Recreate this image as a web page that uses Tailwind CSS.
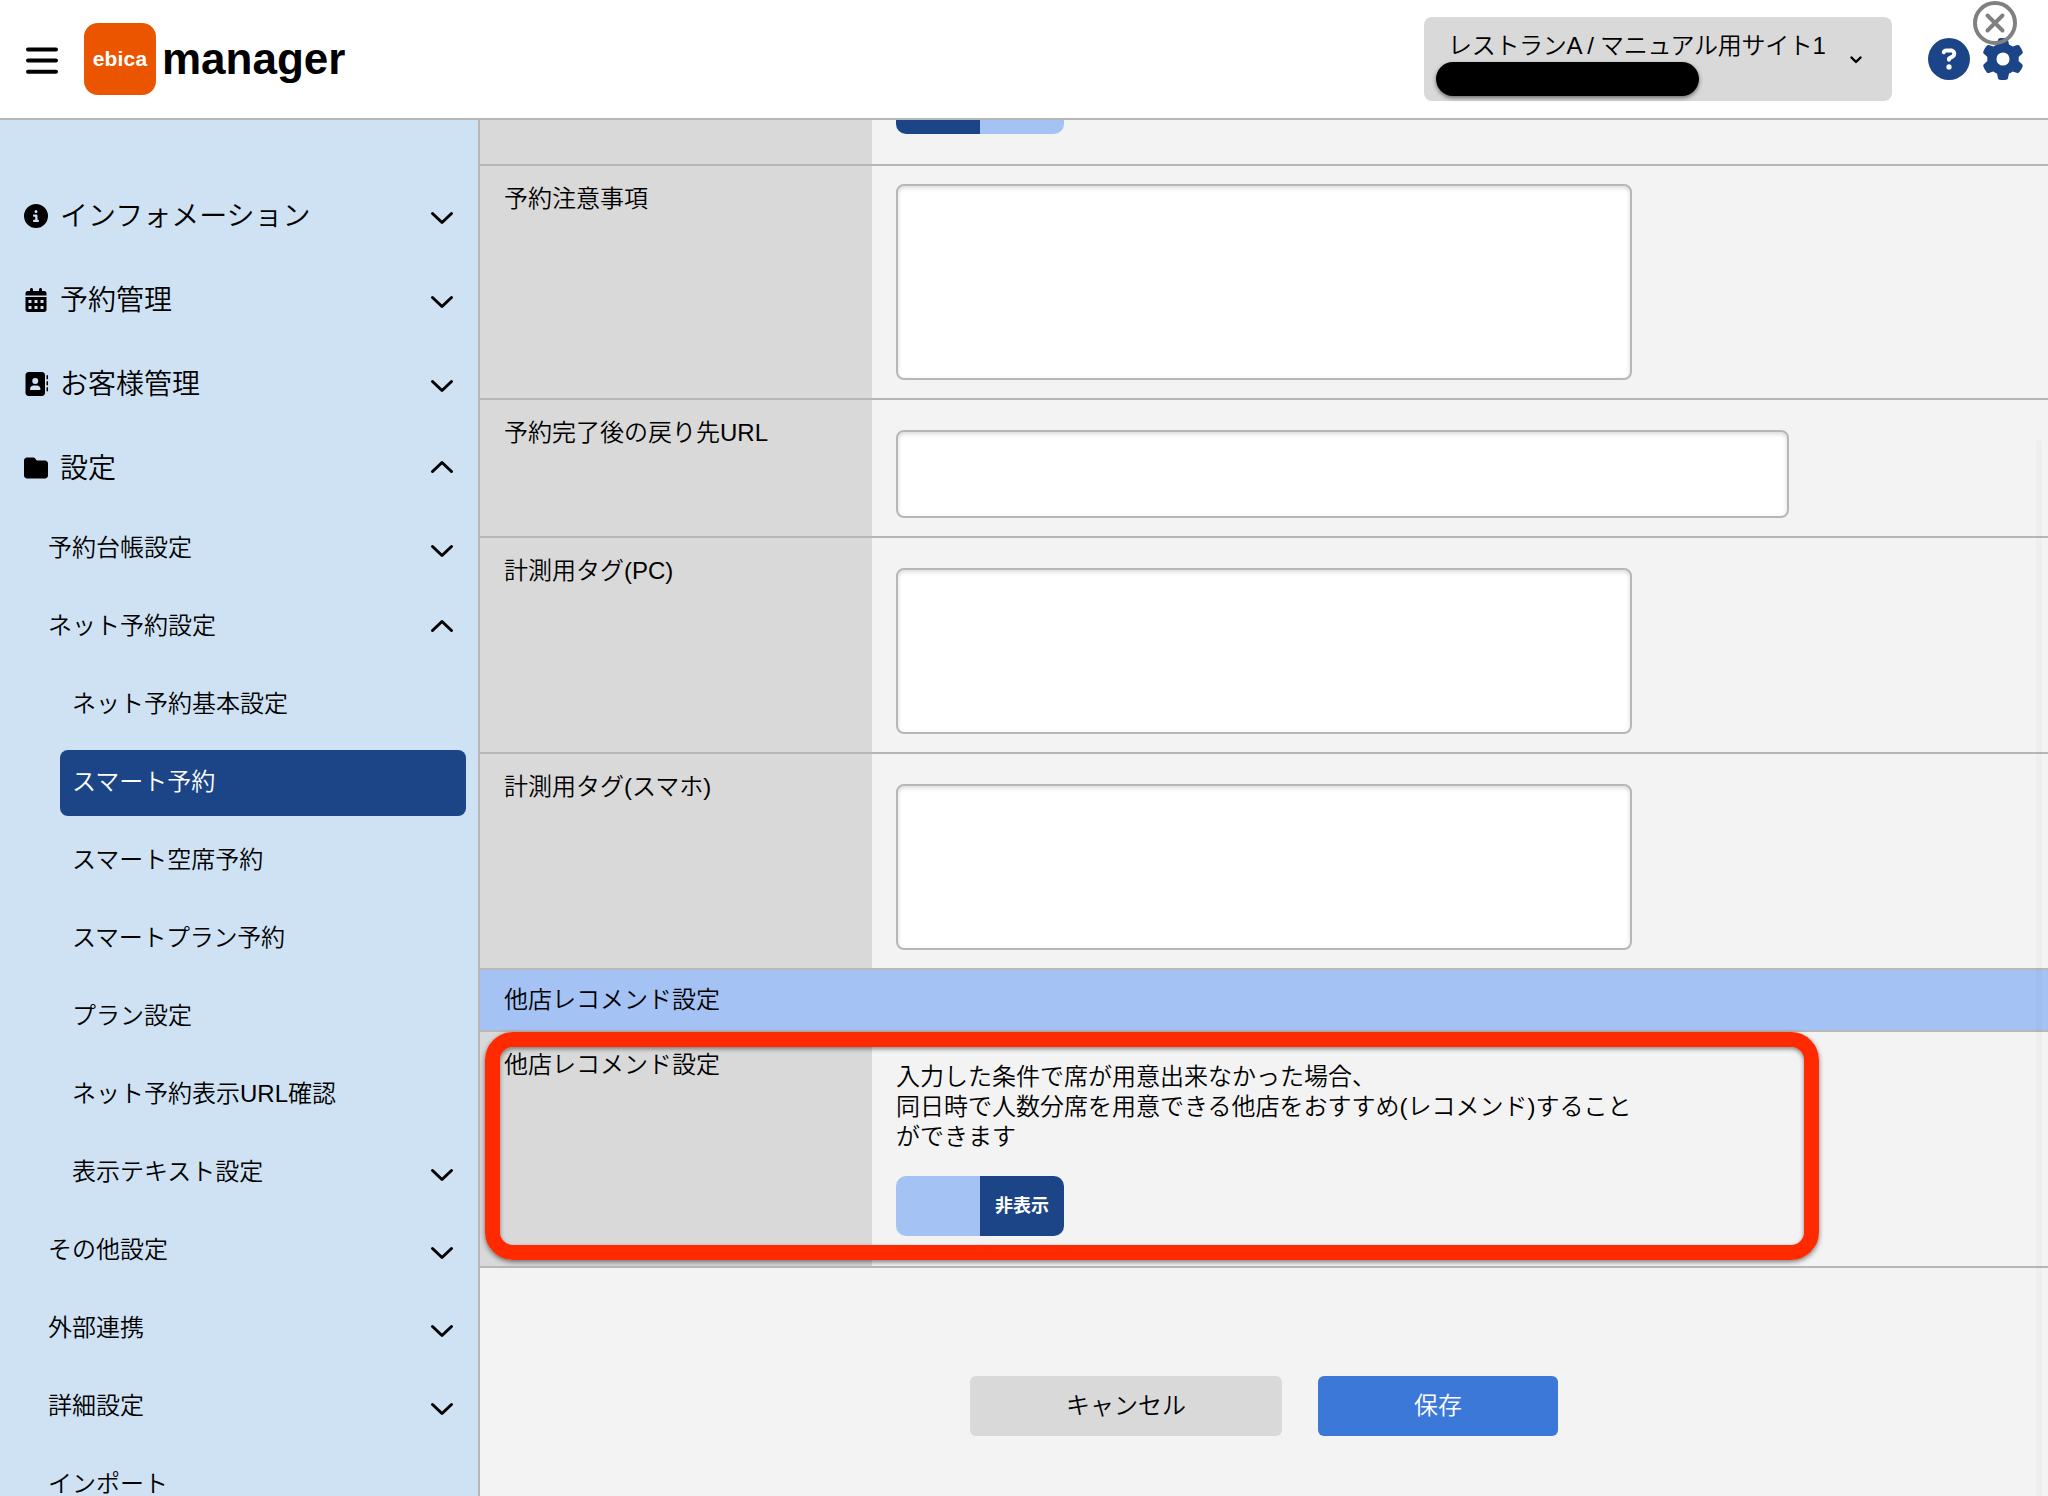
<!doctype html>
<html lang="ja">

<head>
  <meta charset="UTF-8">
  <meta name="viewport" content="width=device-width, initial-scale=1.0">
  <title>ebica manager</title>
  <script src="https://cdn.jsdelivr.net/npm/@tailwindcss/browser@4"></script>
</head>

<body class="relative h-screen overflow-hidden flex flex-col bg-[#f3f3f3] text-black text-2xl leading-[30px] font-[350] font-['Liberation_Sans','Noto_Sans_CJK_JP',sans-serif]">
  <svg class="hidden">
    <symbol id="down" viewBox="0 0 24 14"><path d="M2.5 2.5 12 11.5l9.5-9" fill="none" stroke="currentColor" stroke-width="3" stroke-linecap="round" stroke-linejoin="round" /></symbol>
    <symbol id="up" viewBox="0 0 24 14"><path d="M2.5 11.5 12 2.5l9.5 9" fill="none" stroke="currentColor" stroke-width="3" stroke-linecap="round" stroke-linejoin="round" /></symbol>
  </svg>

  <header class="shrink-0 h-[120px] flex items-center bg-white border-b-2 border-[#b7b7b7]">
    <svg class="ml-[26px] mt-0.5 w-8 h-[27px]" viewBox="0 0 32 27" fill="none" stroke="currentColor" stroke-width="4" stroke-linecap="round">
      <path d="M2 2.4h28M2 13.6h28M2 24.8h28" />
    </svg>
    <div class="ml-[26px] size-[72px] rounded-[14px] bg-[#eb5500] text-white text-[21px] tracking-[0.2px] font-bold flex items-center justify-center">ebica</div>
    <h1 class="ml-1.5 text-[44px] leading-none font-bold">manager</h1>

    <div class="ml-auto w-[468px] h-[84px] pl-3 pr-[30px] rounded-lg bg-[#d9d9d9] flex items-center justify-between">
      <div class="w-[390px] pt-[9px]">
        <p class="pl-3 whitespace-nowrap tracking-[-0.3px]">レストランA / マニュアル用サイト1</p>
        <div class="mt-[1px] w-[263px] h-[34px] rounded-full bg-black shadow-[0_2px_4px_rgba(0,0,0,0.5)]"></div>
      </div>
      <svg class="mt-0.5 w-3 h-2" viewBox="0 0 12 8" fill="none" stroke="currentColor" stroke-width="2.4" stroke-linecap="round" stroke-linejoin="round"><path d="M1.5 1.5 6 6l4.5-4.5" /></svg>
    </div>
    <svg class="ml-9 size-[42px] fill-[#1c4587]" viewBox="0 0 512 512"><path d="M256 512A256 256 0 1 0 256 0a256 256 0 1 0 0 512zM169.800 165.300c7.900-22.300 29.100-37.300 52.800-37.300l58.300 0c34.900 0 63.100 28.300 63.100 63.100c0 22.600-12.100 43.500-31.700 54.800L280 264.400c-.2 13-10.900 23.600-24 23.600c-13.300 0-24-10.700-24-24l0-13.500c0-8.600 4.600-16.500 12.100-20.800l44.300-25.400c4.700-2.700 7.600-7.700 7.600-13.100c0-8.400-6.800-15.100-15.100-15.100l-58.300 0c-3.400 0-6.400 2.100-7.500 5.300l-.4 1.200c-4.400 12.500-18.200 19-30.600 14.600s-19-18.200-14.600-30.600l.4-1.200zM224 352a32 32 0 1 1 64 0 32 32 0 1 1 -64 0z" /></svg>
    <svg class="ml-3 mr-6 size-[42px] fill-[#1c4587]" viewBox="0 0 512 512"><path d="M495.9 166.600c3.200 8.700 .5 18.400-6.400 24.600l-43.300 39.400c1.100 8.300 1.700 16.800 1.700 25.400s-.6 17.100-1.700 25.400l43.300 39.400c6.900 6.200 9.600 15.900 6.400 24.600c-4.400 11.900-9.700 23.300-15.800 34.300l-4.700 8.100c-6.600 11-14 21.400-22.100 31.200c-5.900 7.200-15.700 9.600-24.500 6.800l-55.700-17.700c-13.400 10.300-28.200 18.900-44 25.400l-12.500 57.100c-2 9.100-9 16.300-18.200 17.800c-13.800 2.300-28 3.500-42.500 3.500s-28.700-1.200-42.500-3.500c-9.200-1.500-16.200-8.700-18.200-17.800l-12.500-57.100c-15.800-6.500-30.600-15.100-44-25.400L83.100 425.900c-8.800 2.800-18.600 .3-24.500-6.800c-8.100-9.800-15.500-20.200-22.100-31.200l-4.700-8.100c-6.100-11-11.400-22.400-15.800-34.300c-3.200-8.700-.5-18.400 6.400-24.600l43.300-39.400C64.600 273.100 64 264.600 64 256s.6-17.100 1.700-25.400L22.400 191.200c-6.900-6.200-9.600-15.900-6.400-24.600c4.400-11.900 9.700-23.300 15.800-34.300l4.700-8.100c6.600-11 14-21.400 22.100-31.200c5.900-7.200 15.700-9.600 24.500-6.800l55.700 17.700c13.400-10.300 28.200-18.900 44-25.400l12.500-57.100c2-9.100 9-16.300 18.200-17.800C227.300 1.200 241.500 0 256 0s28.700 1.200 42.500 3.500c9.200 1.500 16.200 8.700 18.200 17.800l12.500 57.100c15.800 6.500 30.600 15.100 44 25.400l55.700-17.700c8.800-2.800 18.600-.3 24.500 6.800c8.100 9.800 15.500 20.200 22.100 31.200l4.700 8.100c6.100 11 11.400 22.400 15.800 34.300zM256 336a80 80 0 1 0 0-160 80 80 0 1 0 0 160z" /></svg>
  </header>

  <!-- overlay close button -->
  <svg class="absolute top-[1px] right-[31px] size-11" viewBox="0 0 44 44" fill="none" stroke="#808080" stroke-width="4" stroke-linecap="round">
    <circle cx="22" cy="22" r="20" />
    <path d="m14.500 14.500 15 15M29.500 14.500l-15 15" />
  </svg>

  <div class="flex-1 min-h-0 flex">
    <nav class="shrink-0 w-[480px] pt-[54px] bg-[#cfe2f3] border-r-2 border-[#b7b7b7] overflow-hidden">
      <ul class="text-[28px]">
        <li class="h-[84px] pl-6 pr-6 flex items-center">
          <svg class="size-6 mr-3" viewBox="0 0 512 512"><path d="M256 512A256 256 0 1 0 256 0a256 256 0 1 0 0 512zM216 336l24 0 0-64-24 0c-13.300 0-24-10.700-24-24s10.700-24 24-24l48 0c13.300 0 24 10.700 24 24l0 88 8 0c13.300 0 24 10.700 24 24s-10.700 24-24 24l-80 0c-13.300 0-24-10.700-24-24s10.700-24 24-24zm40-208a32 32 0 1 1 0 64 32 32 0 1 1 0-64z" /></svg>
          <span class="pt-0.5">インフォメーション</span>
          <svg class="ml-auto mt-[3px] w-6 h-3.5"><use href="#down" /></svg>
        </li>
        <li class="h-[84px] pl-6 pr-6 flex items-center">
          <svg class="size-6 mr-3" viewBox="-32 0 512 512" fill-rule="evenodd"><path d="M128 0c17.700 0 32 14.300 32 32v32h128V32c0-17.700 14.300-32 32-32s32 14.300 32 32v32h48c26.500 0 48 21.500 48 48v48H0v-48C0 85.500 21.500 64 48 64h48V32c0-17.700 14.300-32 32-32zM0 192h448v272c0 26.500-21.500 48-48 48H48c-26.500 0-48-21.500-48-48zM64 256v64h64v-64zm128 0v64h64v-64zm128 0v64h64v-64zM64 384v64h64v-64zm128 0v64h64v-64zm128 0v64h64v-64z" /></svg>
          <span class="pt-0.5">予約管理</span>
          <svg class="ml-auto mt-[3px] w-6 h-3.5"><use href="#down" /></svg>
        </li>
        <li class="h-[84px] pl-6 pr-6 flex items-center">
          <svg class="size-6 mr-3" viewBox="0 0 512 512"><path d="M96 0C60.700 0 32 28.700 32 64l0 384c0 35.300 28.700 64 64 64l288 0c35.300 0 64-28.700 64-64l0-384c0-35.300-28.700-64-64-64L96 0zM208 288l64 0c44.200 0 80 35.800 80 80c0 8.800-7.200 16-16 16l-192 0c-8.800 0-16-7.200-16-16c0-44.200 35.800-80 80-80zm-32-96a64 64 0 1 1 128 0 64 64 0 1 1 -128 0zM512 80c0-8.800-7.200-16-16-16s-16 7.200-16 16l0 64c0 8.800 7.200 16 16 16s16-7.200 16-16l0-64zM496 192c-8.800 0-16 7.200-16 16l0 64c0 8.800 7.200 16 16 16s16-7.200 16-16l0-64c0-8.800-7.200-16-16-16zm16 144c0-8.800-7.200-16-16-16s-16 7.200-16 16l0 64c0 8.800 7.200 16 16 16s16-7.200 16-16l0-64z" /></svg>
          <span class="pt-0.5">お客様管理</span>
          <svg class="ml-auto mt-[3px] w-6 h-3.5"><use href="#down" /></svg>
        </li>
        <li class="h-[84px] pl-6 pr-6 flex items-center">
          <svg class="size-6 mr-3" viewBox="0 0 512 512"><path d="M64 480H448c35.300 0 64-28.700 64-64V160c0-35.300-28.700-64-64-64H288c-10.100 0-19.600-4.700-25.600-12.800L243.200 57.600C231.100 41.500 212.100 32 192 32H64C28.700 32 0 60.700 0 96V416c0 35.300 28.700 64 64 64z" /></svg>
          <span class="pt-0.5">設定</span>
          <svg class="ml-auto mb-[3px] w-6 h-3.5"><use href="#up" /></svg>
        </li>
      </ul>
      <ul>
        <li class="h-[78px] pb-0.5 pl-12 pr-6 flex items-center justify-between">予約台帳設定<svg class="mt-1.5 w-6 h-3.5"><use href="#down" /></svg></li>
        <li class="h-[78px] pb-0.5 pl-12 pr-6 flex items-center justify-between">ネット予約設定<svg class="w-6 h-3.5"><use href="#up" /></svg></li>
        <li class="h-[78px] pb-0.5 pl-[72px] flex items-center">ネット予約基本設定</li>
        <li class="h-[66px] pb-0.5 my-1.5 ml-[60px] mr-3 pl-3 flex items-center rounded-lg bg-[#1c4587] text-white">スマート予約</li>
        <li class="h-[78px] pb-0.5 pl-[72px] flex items-center">スマート空席予約</li>
        <li class="h-[78px] pb-0.5 pl-[72px] flex items-center tracking-[-0.3px]">スマートプラン予約</li>
        <li class="h-[78px] pb-0.5 pl-[72px] flex items-center">プラン設定</li>
        <li class="h-[78px] pb-0.5 pl-[72px] flex items-center">ネット予約表示URL確認</li>
        <li class="h-[78px] pb-0.5 pl-[72px] pr-6 flex items-center justify-between">表示テキスト設定<svg class="mt-1.5 w-6 h-3.5"><use href="#down" /></svg></li>
        <li class="h-[78px] pb-0.5 pl-12 pr-6 flex items-center justify-between">その他設定<svg class="mt-1.5 w-6 h-3.5"><use href="#down" /></svg></li>
        <li class="h-[78px] pb-0.5 pl-12 pr-6 flex items-center justify-between">外部連携<svg class="mt-1.5 w-6 h-3.5"><use href="#down" /></svg></li>
        <li class="h-[78px] pb-0.5 pl-12 pr-6 flex items-center justify-between">詳細設定<svg class="mt-1.5 w-6 h-3.5"><use href="#down" /></svg></li>
        <li class="h-[78px] pb-0.5 pl-12 flex items-center">インポート</li>
      </ul>
    </nav>

    <main class="flex-1 min-w-0 overflow-hidden">
      <div class="flex h-[46px] border-b-2 border-[#b7b7b7]">
        <div class="w-[392px] bg-[#d9d9d9]"></div>
        <div class="pl-6">
          <div class="flex h-3.5 w-[168px] rounded-b-[10px] overflow-hidden">
            <div class="w-1/2 bg-[#1c4587]"></div>
            <div class="w-1/2 bg-[#a4c2f4]"></div>
          </div>
        </div>
      </div>
      <div class="flex border-b-2 border-[#b7b7b7]">
        <div class="w-[392px] pl-6 pt-[18px] bg-[#d9d9d9]">予約注意事項</div>
        <div class="pl-6 py-[18px]">
          <textarea class="block w-[736px] h-[196px] resize-none rounded-lg border-2 border-[#b7b7b7] bg-white shadow-[inset_0_2px_4px_rgba(0,0,0,0.15)]"></textarea>
        </div>
      </div>
      <div class="flex border-b-2 border-[#b7b7b7]">
        <div class="w-[392px] pl-6 pt-[18px] bg-[#d9d9d9]">予約完了後の戻り先URL</div>
        <div class="pl-6 pt-[30px] pb-[18px]">
          <input type="text" class="block w-[893px] h-[88px] rounded-lg border-2 border-[#b7b7b7] bg-white shadow-[inset_0_2px_4px_rgba(0,0,0,0.15)]">
        </div>
      </div>
      <div class="flex border-b-2 border-[#b7b7b7]">
        <div class="w-[392px] pl-6 pt-[18px] bg-[#d9d9d9]">計測用タグ(PC)</div>
        <div class="pl-6 pt-[30px] pb-[18px]">
          <textarea class="block w-[736px] h-[166px] resize-none rounded-lg border-2 border-[#b7b7b7] bg-white shadow-[inset_0_2px_4px_rgba(0,0,0,0.15)]"></textarea>
        </div>
      </div>
      <div class="flex border-b-2 border-[#b7b7b7]">
        <div class="w-[392px] pl-6 pt-[18px] bg-[#d9d9d9]">計測用タグ(スマホ)</div>
        <div class="pl-6 pt-[30px] pb-[18px]">
          <textarea class="block w-[736px] h-[166px] resize-none rounded-lg border-2 border-[#b7b7b7] bg-white shadow-[inset_0_2px_4px_rgba(0,0,0,0.15)]"></textarea>
        </div>
      </div>
      <h2 class="h-[62px] pl-6 pb-px flex items-center bg-[#a4c2f4] border-b-2 border-[#b7b7b7]">他店レコメンド設定</h2>
      <div class="relative flex border-b-2 border-[#b7b7b7]">
        <div class="w-[392px] pl-6 pt-[18px] bg-[#d9d9d9]">他店レコメンド設定</div>
        <div class="pl-6 py-[30px]">
          <p>入力した条件で席が用意出来なかった場合、<br>同日時で人数分席を用意できる他店をおすすめ(レコメンド)すること<br>ができます</p>
          <div class="mt-6 flex h-[60px] w-[168px] rounded-[10px] overflow-hidden">
            <div class="w-1/2 bg-[#a4c2f4]"></div>
            <div class="w-1/2 bg-[#1c4587] text-white text-lg font-bold flex items-center justify-center">非表示</div>
          </div>
        </div>
        <!-- highlight frame -->
        <div class="absolute left-[5px] top-0 w-[1334px] h-[228px] rounded-[28px] border-[15px] border-[#ff2a00] shadow-[0_2px_5px_rgba(0,0,0,0.5),inset_0_2px_4px_rgba(0,0,0,0.45)]"></div>
      </div>
      <div class="mt-[108px] ml-[490px] flex gap-9">
        <button class="w-[312px] h-[60px] rounded-md bg-[#d9d9d9]">キャンセル</button>
        <button class="w-[240px] h-[60px] rounded-md bg-[#3c78d8] text-white">保存</button>
      </div>
    </main>
  </div>

  <!-- scrollbar thumb -->
  <div class="absolute right-1.5 top-[440px] bottom-0 w-1.5 rounded-t-full bg-black/2"></div>
</body>

</html>
